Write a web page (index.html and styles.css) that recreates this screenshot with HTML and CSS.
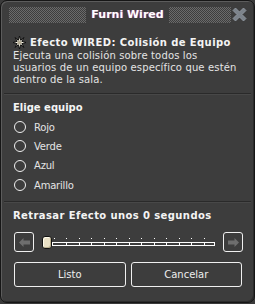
FILE: index.html
```html
<!DOCTYPE html>
<html lang="es">
<head>
<meta charset="utf-8">
<title>Furni Wired</title>
<link rel="stylesheet" href="styles.css">
</head>
<body>
<div class="window">
  <div class="titlebar">
    <div class="dots dots-left"></div>
    <div class="title">Furni Wired</div>
    <div class="dots dots-right"></div>
    <svg class="close" width="15" height="15" viewBox="0 0 15 15">
      <path d="M1 3.5 L3.5 1 L7.5 5 L11.5 1 L14 3.5 L10 7.5 L14 11.5 L11.5 14 L7.5 10 L3.5 14 L1 11.5 L5 7.5 Z" fill="#7c838b" stroke="#9aa1a9" stroke-width="0.8" stroke-linejoin="miter"/>
    </svg>
  </div>

  <div class="section">
    <div class="heading">
      <svg class="spark" width="13" height="13" viewBox="0 0 13 13">
        <path d="M6.5 0 L7.6 4.2 L11 1.5 L8.8 5.3 L13 6.5 L8.8 7.7 L11 11.5 L7.6 8.8 L6.5 13 L5.4 8.8 L2 11.5 L4.2 7.7 L0 6.5 L4.2 5.3 L2 1.5 L5.4 4.2 Z" fill="#f8f4e6" stroke="#111" stroke-width="1" stroke-linejoin="miter"/>
        <circle cx="6.5" cy="6.5" r="2" fill="#b3ab94"/>
      </svg>
      <span>Efecto WIRED: Colisión de Equipo</span>
    </div>
    <p class="desc">Ejecuta una colisión sobre todos los<br>usuarios de un equipo específico que estén<br>dentro de la sala.</p>
  </div>

  <div class="sep sep1"></div>

  <div class="section">
    <div class="label label1">Elige equipo</div>
    <ul class="radios">
      <li><span class="radio"></span>Rojo</li>
      <li><span class="radio"></span>Verde</li>
      <li><span class="radio"></span>Azul</li>
      <li><span class="radio"></span>Amarillo</li>
    </ul>
  </div>

  <div class="sep sep2"></div>

  <div class="section">
    <div class="label label2">Retrasar Efecto unos 0 segundos</div>
    <div class="slider-row">
      <div class="arrow-btn">
        <svg width="11" height="9" viewBox="0 0 11 9"><path d="M0 4.5 L4.5 0 L4.5 2.5 L11 2.5 L11 6.5 L4.5 6.5 L4.5 9 Z" fill="#6e6e6e"/></svg>
      </div>
      <div class="slider">
        <div class="handle"></div>
        <svg class="track" width="163" height="9" viewBox="0 0 163 9">
          <g fill="#ffffff">
            <rect x="2" y="0" width="1" height="1"/><rect x="14" y="0" width="1" height="1"/><rect x="27" y="0" width="1" height="1"/><rect x="39" y="0" width="1" height="1"/><rect x="52" y="0" width="1" height="1"/><rect x="64" y="0" width="1" height="1"/><rect x="77" y="0" width="1" height="1"/><rect x="89" y="0" width="1" height="1"/><rect x="102" y="0" width="1" height="1"/><rect x="114" y="0" width="1" height="1"/><rect x="127" y="0" width="1" height="1"/><rect x="139" y="0" width="1" height="1"/><rect x="152" y="0" width="1" height="1"/>
            <rect x="0" y="4" width="163" height="1"/>
            <rect x="0" y="7" width="163" height="1"/>
            <rect x="0" y="4" width="1" height="4"/><rect x="14" y="5" width="1" height="2"/><rect x="27" y="5" width="1" height="2"/><rect x="39" y="5" width="1" height="2"/><rect x="52" y="5" width="1" height="2"/><rect x="64" y="5" width="1" height="2"/><rect x="77" y="5" width="1" height="2"/><rect x="89" y="5" width="1" height="2"/><rect x="102" y="5" width="1" height="2"/><rect x="114" y="5" width="1" height="2"/><rect x="127" y="5" width="1" height="2"/><rect x="139" y="5" width="1" height="2"/><rect x="152" y="5" width="1" height="2"/><rect x="162" y="4" width="1" height="4"/>
          </g>
        </svg>
      </div>
      <div class="arrow-btn">
        <svg width="11" height="9" viewBox="0 0 11 9"><path d="M11 4.5 L6.5 0 L6.5 2.5 L0 2.5 L0 6.5 L6.5 6.5 L6.5 9 Z" fill="#6e6e6e"/></svg>
      </div>
    </div>
    <div class="buttons">
      <button class="btn">Listo</button>
      <button class="btn">Cancelar</button>
    </div>
  </div>
</div>
</body>
</html>
```

FILE: styles.css
```css
* { box-sizing: border-box; }
html, body {
  margin: 0;
  padding: 0;
  background: #3a3a3a;
}
body {
  width: 255px;
  height: 304px;
  font-family: "DejaVu Sans", "Liberation Sans", sans-serif;
  color: #ececec;
}
.window {
  width: 255px;
  height: 303px;
  background: #3d3d3d;
  border: 1px solid #161616;
  border-radius: 7px;
  box-shadow: inset 1px 1px 0 #5c5c5c, inset -1px -1px 0 #2c2c2c;
  display: flex;
  flex-direction: column;
  overflow: hidden;
}
.titlebar {
  height: 27px;
  display: flex;
  align-items: center;
  padding: 0 7px 0 8px;
  flex: none;
}
.dots {
  height: 16px;
  background-image: conic-gradient(#777 25%, transparent 0 50%, #777 0 75%, transparent 0);
  background-size: 2px 2px;
  opacity: 0.8;
}
.dots-left { width: 77px; }
.dots-right { width: 62px; }
.title {
  flex: 1;
  text-align: center;
  font-weight: bold;
  font-size: 11px;
  color: #ffffff;
  text-shadow: -1px 0 rgba(230, 60, 60, 0.45), 1px 0 rgba(80, 80, 230, 0.45);
}
.close { flex: none; margin-left: 1px; }
.section {
  padding: 0 12px;
}
.heading {
  display: flex;
  align-items: center;
  gap: 4px;
  margin-top: 7px;
  height: 14px;
  font-weight: bold;
  font-size: 10px;
  letter-spacing: 0.4px;
  white-space: nowrap;
  color: #f4f4f4;
}
.spark { flex: none; margin-left: 0; }
.desc {
  margin: 1px 0 0 0;
  font-size: 10px;
  line-height: 12px;
  letter-spacing: 0.15px;
  white-space: nowrap;
  color: #e4e4e4;
}
.sep {
  height: 2px;
  margin: 0 3px;
  border-top: 1px solid #2a2a2a;
  border-bottom: 1px solid #484848;
  flex: none;
}
.sep1 { margin-top: 7px; }
.sep2 { margin-top: 10px; }
.label {
  height: 14px;
  line-height: 14px;
  font-weight: bold;
  font-size: 10px;
  white-space: nowrap;
  color: #f4f4f4;
}
.label1 { margin-top: 6px; }
.label2 { margin-top: 6px; letter-spacing: 0.4px; }
.radios {
  list-style: none;
  margin: 6px 0 0 0;
  padding: 0;
  display: flex;
  flex-direction: column;
  gap: 7.4px;
}
.radios li {
  display: flex;
  align-items: center;
  gap: 8px;
  height: 12px;
  font-size: 10px;
  letter-spacing: -0.2px;
  color: #e4e4e4;
}
.radio {
  width: 12px;
  height: 12px;
  border: 1px solid #f0f0f0;
  border-radius: 50%;
  margin-left: 1px;
  flex: none;
}
.slider-row {
  display: flex;
  align-items: center;
  margin-top: 9px;
  padding-left: 1px;
}
.arrow-btn {
  width: 20px;
  height: 20px;
  border: 1px solid #f0f0f0;
  border-radius: 3px;
  display: flex;
  align-items: center;
  justify-content: center;
  flex: none;
}
.slider {
  display: flex;
  align-items: center;
  margin: 0 8px 0 8px;
  width: 173px;
}
.handle {
  width: 10px;
  height: 13px;
  background: #e8dfc4;
  border: 1px solid #111;
  border-radius: 3px;
  box-shadow: inset 1px 1px 0 #fffbea, inset -1px -1px 0 #b8ad8c;
  flex: none;
}
.track { flex: none; }
.buttons {
  display: flex;
  gap: 5px;
  margin-top: 10px;
  padding-left: 1px;
}
.btn {
  flex: 1;
  height: 25px;
  background: #3d3d3d;
  border: 1px solid #f0f0f0;
  border-radius: 3px;
  color: #eeeeee;
  font-family: "DejaVu Sans", "Liberation Sans", sans-serif;
  font-size: 10px;
  padding: 0;
}
```
